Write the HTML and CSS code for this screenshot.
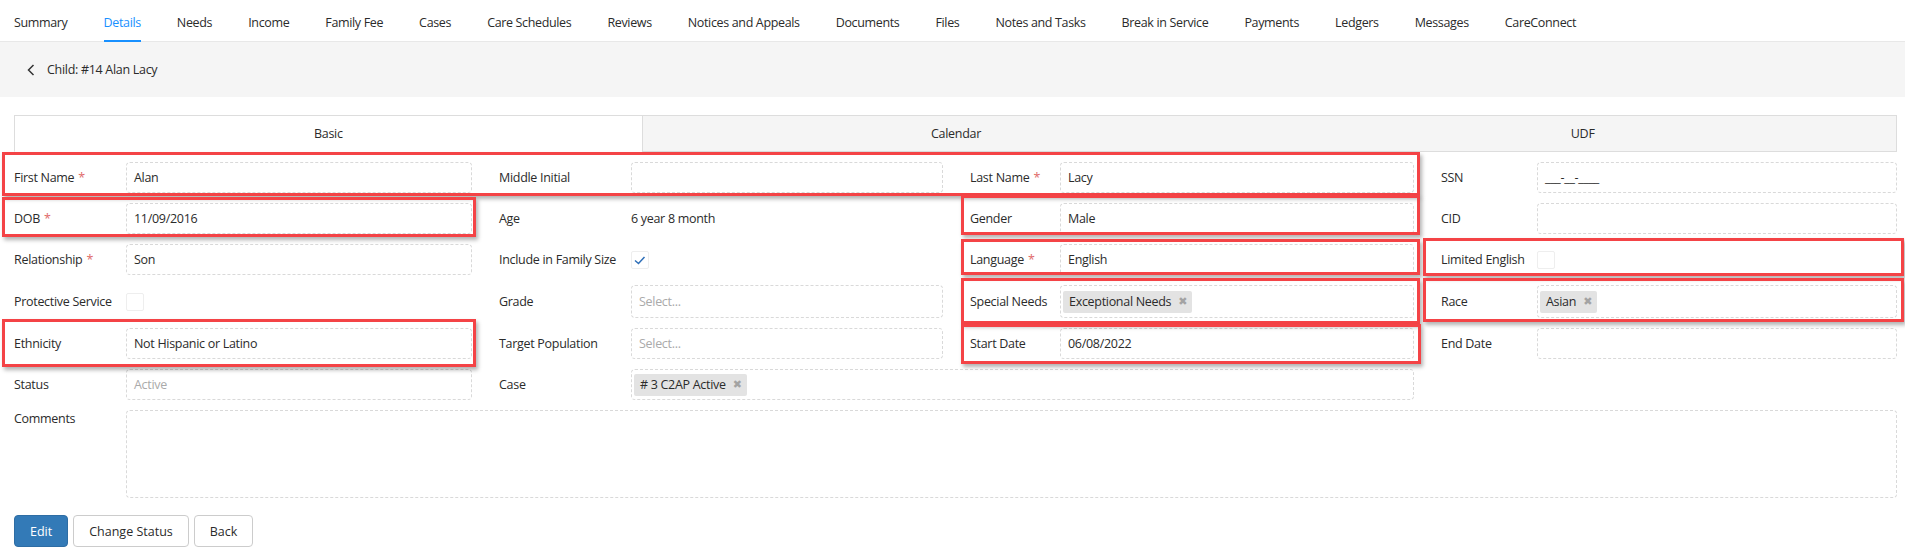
FILE: index.html
```html
<!DOCTYPE html>
<html lang="en">
<head>
  <meta charset="UTF-8">
  <meta name="viewport" content="width=device-width, initial-scale=1.0">
  <title>Child: #14 Alan Lacy</title>
  <link rel="stylesheet" href="styles.css">
</head>
<body>
<div class="page">
  <div class="tabs">
    <a class="tab">Summary</a>
    <a class="tab active">Details</a>
    <a class="tab">Needs</a>
    <a class="tab">Income</a>
    <a class="tab">Family Fee</a>
    <a class="tab">Cases</a>
    <a class="tab">Care Schedules</a>
    <a class="tab">Reviews</a>
    <a class="tab">Notices and Appeals</a>
    <a class="tab">Documents</a>
    <a class="tab">Files</a>
    <a class="tab">Notes and Tasks</a>
    <a class="tab">Break in Service</a>
    <a class="tab">Payments</a>
    <a class="tab">Ledgers</a>
    <a class="tab">Messages</a>
    <a class="tab">CareConnect</a>
  </div>

  <div class="crumb">
    <svg class="back" width="8" height="12" viewBox="0 0 8 12"><polyline points="6.5,1 1.5,6 6.5,11" /></svg>
    <span>Child: #14 Alan Lacy</span>
  </div>

  <div class="panel">
    <div class="subtabs">
      <div class="subtab active">Basic</div>
      <div class="subtab cal">Calendar</div>
      <div class="subtab">UDF</div>
    </div>

    <div class="form">
      <!-- row 1 -->
      <div class="lbl">First Name <i>*</i></div>
      <div class="inp">Alan</div>
      <div class="lbl pad">Middle Initial</div>
      <div class="inp"></div>
      <div class="lbl pad">Last Name <i>*</i></div>
      <div class="inp">Lacy</div>
      <div class="lbl pad">SSN</div>
      <div class="inp">___-__-____</div>

      <!-- row 2 -->
      <div class="lbl">DOB <i>*</i></div>
      <div class="inp">11/09/2016</div>
      <div class="lbl pad">Age</div>
      <div class="txt">6 year 8 month</div>
      <div class="lbl pad">Gender</div>
      <div class="inp">Male</div>
      <div class="lbl pad">CID</div>
      <div class="inp"></div>

      <!-- row 3 -->
      <div class="lbl">Relationship <i>*</i></div>
      <div class="inp">Son</div>
      <div class="lbl pad">Include in Family Size</div>
      <div class="txt">
        <span class="check"><svg width="18" height="18" viewBox="0 0 18 18"><polyline points="4,9.5 7.5,12.5 13.5,6" /></svg></span>
      </div>
      <div class="lbl pad">Language <i>*</i></div>
      <div class="inp">English</div>
      <div class="lbl pad">Limited English</div>
      <div class="txt"><span class="check"></span></div>

      <!-- row 4 -->
      <div class="lbl">Protective Service</div>
      <div class="txt"><span class="check"></span></div>
      <div class="lbl pad">Grade</div>
      <div class="inp ph">Select...</div>
      <div class="lbl pad">Special Needs</div>
      <div class="inp tags"><span class="tag">Exceptional Needs <b>✖</b></span></div>
      <div class="lbl pad">Race</div>
      <div class="inp tags"><span class="tag">Asian <b>✖</b></span></div>

      <!-- row 5 -->
      <div class="lbl">Ethnicity</div>
      <div class="inp">Not Hispanic or Latino</div>
      <div class="lbl pad">Target Population</div>
      <div class="inp ph">Select...</div>
      <div class="lbl pad">Start Date</div>
      <div class="inp">06/08/2022</div>
      <div class="lbl pad">End Date</div>
      <div class="inp"></div>

      <!-- row 6 -->
      <div class="lbl">Status</div>
      <div class="inp ph">Active</div>
      <div class="lbl pad">Case</div>
      <div class="inp tags wide"><span class="tag"># 3 C2AP Active <b>✖</b></span></div>

      <!-- comments -->
      <div class="lbl top">Comments</div>
      <div class="inp area"></div>
    </div>

    <div class="actions">
      <button class="btn primary">Edit</button>
      <button class="btn">Change Status</button>
      <button class="btn">Back</button>
    </div>
  </div>

  <!-- review highlights drawn over the form -->
  <div class="mark m1"></div>
  <div class="mark m2"></div>
  <div class="mark m3"></div>
  <div class="mark m4"></div>
  <div class="mark m5"></div>
  <div class="mark m6"></div>
  <div class="mark m7"></div>
  <div class="mark m8"></div>
  <div class="mark m9"></div>
</div>
</body>
</html>
```

FILE: styles.css
```css
body {
  margin: 0;
  font-family: "Open Sans", "Noto Sans", sans-serif;
  font-size: 12.5px;
  letter-spacing: -0.3px;
  color: #2b2b2b;
  background: #fff;
}

.page {
  position: relative;
  height: 554px;
  overflow: hidden;
}

/* top tabs */
.tabs {
  display: flex;
  gap: 36px;
  height: 41px;
  padding-left: 14px;
  border-bottom: 1px solid #e8e8e8;
}
.tab {
  display: flex;
  align-items: center;
  height: 42px;
  box-sizing: border-box;
  padding-top: 4px;
  border-bottom: 2px solid transparent;
  white-space: nowrap;
  letter-spacing: -0.35px;
  color: #2b2b2b;
}
.tab.active {
  color: #1890ff;
  border-bottom-color: #1890ff;
}

/* title strip */
.crumb {
  display: flex;
  align-items: center;
  gap: 12px;
  height: 55px;
  padding-left: 27px;
  background: #f5f5f5;
}
.back polyline {
  fill: none;
  stroke: #333;
  stroke-width: 1.5;
}

.panel {
  padding: 18px 8px 0 14px;
}

/* inner tabs */
.subtabs {
  display: grid;
  grid-template-columns: repeat(3, 1fr);
  height: 37px;
}
.subtab {
  display: flex;
  align-items: center;
  justify-content: center;
  background: #f5f5f5;
  border-top: 1px solid #ddd;
  border-bottom: 1px solid #ddd;
}
.subtab.active {
  background: #fff;
  border-left: 1px solid #ddd;
  border-bottom-color: transparent;
}
.subtab.cal {
  border-left: 1px solid #ddd;
}
.subtab:last-child {
  border-right: 1px solid #ddd;
}

/* form grid */
.form {
  display: grid;
  grid-template-columns: 112px 346px 159px 312px 117px 354px 123px 360px;
  grid-template-rows: 31px 31px 31px 33px 31px 31px 88px;
  row-gap: 10px;
  padding-top: 10px;
}
.lbl {
  display: flex;
  align-items: center;
  white-space: nowrap;
}
.lbl i {
  font-style: normal;
  color: #e06a6a;
  margin-left: 4px;
}
.lbl.pad {
  padding-left: 27px;
}
.lbl.top {
  grid-column: 1;
  align-items: flex-start;
}
.inp {
  display: flex;
  align-items: center;
  padding: 0 7px;
  border: 1px dashed #d9d9d9;
  border-radius: 4px;
  white-space: nowrap;
}
.inp.ph {
  color: #aaa;
}
.inp.tags {
  padding-left: 2px;
}
.inp.wide {
  grid-column: 4 / 7;
}
.inp.area {
  grid-column: 2 / 9;
}
.txt {
  display: flex;
  align-items: center;
}

.check {
  display: inline-block;
  width: 18px;
  height: 18px;
  box-sizing: border-box;
  border: 1px solid #eee;
  border-radius: 2px;
}
.check svg {
  display: block;
  margin: -1px;
}
.check polyline {
  fill: none;
  stroke: #2f6fb8;
  stroke-width: 1.5;
}

.tag {
  display: inline-flex;
  align-items: center;
  height: 22px;
  padding: 0 5px 0 6px;
  background: #e3e3e3;
  border-radius: 2px;
}
.tag b {
  font-weight: normal;
  font-family: "DejaVu Sans", sans-serif;
  font-size: 11px;
  color: #a3a3a3;
  margin-left: 7px;
}

/* buttons */
.actions {
  display: flex;
  gap: 5px;
  margin-top: 17px;
}
.btn {
  height: 32px;
  padding: 0 15px;
  font-family: inherit;
  font-size: 12.5px;
  letter-spacing: normal;
  color: #2b2b2b;
  background: #fff;
  border: 1px solid #ccc;
  border-radius: 4px;
}
.btn.primary {
  color: #fff;
  background: #337ab7;
  border-color: #2e6da4;
}

/* red review boxes */
.mark {
  position: absolute;
  box-sizing: border-box;
  border: 3px solid #f44346;
  box-shadow: 2px 3px 4px rgba(0, 0, 0, 0.3);
}
.m1 { left: 2px;    top: 152px; width: 1418px; height: 44px; }
.m2 { left: 2px;    top: 197px; width: 474px;  height: 40px; }
.m3 { left: 2px;    top: 319px; width: 474px;  height: 48px; }
.m4 { left: 961px;  top: 195px; width: 459px;  height: 40px; }
.m5 { left: 961px;  top: 239px; width: 459px;  height: 36px; }
.m6 { left: 961px;  top: 278px; width: 459px;  height: 46px; }
.m7 { left: 961px;  top: 324px; width: 460px;  height: 40px; }
.m8 { left: 1423px; top: 238px; width: 481px;  height: 38px; }
.m9 { left: 1423px; top: 278px; width: 481px;  height: 44px; }
```
